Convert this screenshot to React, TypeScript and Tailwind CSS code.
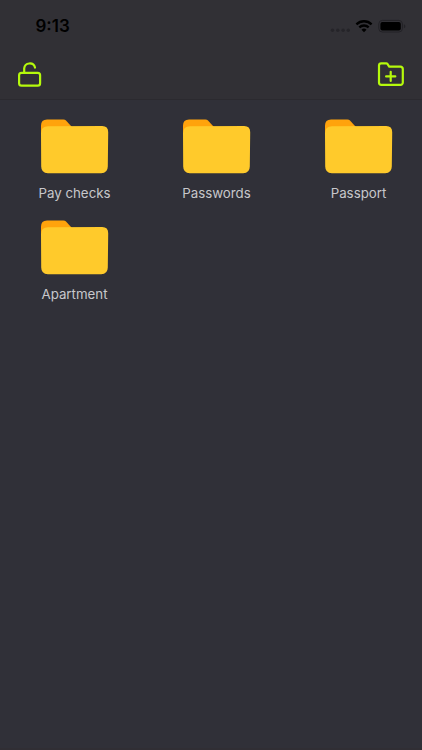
const folders = ['Pay checks', 'Passwords', 'Passport', 'Apartment'];

function StatusIcons() {
  return (
    <svg width="76" height="16" viewBox="330 18 76 16" fill="none">
      <g fill="#252429">
        <circle cx="332.5" cy="30.3" r="1.7" />
        <circle cx="337.8" cy="30.3" r="1.7" />
        <circle cx="343.1" cy="30.3" r="1.7" />
        <circle cx="348.3" cy="30.3" r="1.7" />
      </g>
      <g stroke="#000" strokeWidth="2.3">
        <path d="M356.4 24.3a11 11 0 0 1 15.2 0" />
        <path d="M359.3 27.4a6.8 6.8 0 0 1 9.4 0" />
      </g>
      <path d="M364 32.2l-2.5-2.5a3.6 3.6 0 0 1 5 0z" fill="#000" />
      <rect x="378.8" y="20.4" width="23.6" height="11.6" rx="3.5" stroke="#222126" />
      <rect x="380.4" y="22" width="20.4" height="8.4" rx="2" fill="#000" />
      <path d="M403.9 24.2c2 .8 2 3.2 0 4z" fill="#222126" />
    </svg>
  );
}

function UnlockIcon() {
  return (
    <svg width="24" height="26" viewBox="18 61 24 26" fill="none" stroke="#b5f90c" strokeWidth="2.2" strokeLinecap="round" strokeLinejoin="round">
      <rect x="19.1" y="72.8" width="21" height="12.9" rx="2.4" />
      <path d="M24.2 72.4V68.4a5.5 5.5 0 0 1 10.8-.8" />
    </svg>
  );
}

function FolderPlusIcon() {
  return (
    <svg width="27" height="25" viewBox="377 62 27 25" fill="none" stroke="#b5f90c" strokeWidth="2.2" strokeLinecap="round" strokeLinejoin="round">
      <path d="M379 65.6a2.3 2.3 0 0 1 2.3-2.3h4.9q.8 0 1.2.6l1.8 2.8h11.3a2.3 2.3 0 0 1 2.3 2.3v13.6a2.3 2.3 0 0 1-2.3 2.3h-19.2a2.3 2.3 0 0 1-2.3-2.3z" />
      <path d="M390.7 71.8v9.2M386.1 76.4h9.2" />
    </svg>
  );
}

function FolderArt() {
  return (
    <svg width="68" height="55" viewBox="40.8 119 68 55">
      <path d="M40.8 134V125.5Q40.8 119.5 46.8 119.5H63.3Q64.8 119.5 65.8 120.5L71.5 126.8V134z" fill="#ffa30c" />
      <path d="M40.8 133.5Q40.8 126.3 47.8 126.3L102 126.1Q108 126.1 108 132.3L107.6 166.5Q107.5 173.1 101 173.2H47.6Q41.1 173.1 41 166.5z" fill="#ffca2b" />
    </svg>
  );
}

export default function App() {
  return (
    <div className="flex h-[750px] w-[422px] flex-col overflow-hidden border-b-2 border-[#302e34] bg-[#303038] font-['Inter',sans-serif]">
      <header className="flex h-[99.5px] shrink-0 flex-col border-b border-[#2b2a2f] bg-[#313035]">
        <div className="flex h-[50px] items-start justify-between pl-[35.5px] pr-4 pt-[18px]">
          <span className="text-[17px] font-semibold leading-[17px] text-black">9:13</span>
          <StatusIcons />
        </div>
        <div className="flex justify-between px-[18px] pt-[11px]">
          <UnlockIcon />
          <div className="pt-px">
            <FolderPlusIcon />
          </div>
        </div>
      </header>
      <main className="grid grid-cols-[74px_74px_74px] gap-x-[68px] pl-[37.5px] pt-[19.5px]">
        {folders.map((name) => (
          <div key={name} className="flex h-[101.3px] flex-col items-center">
            <FolderArt />
            <span className="mt-[9px] whitespace-nowrap text-[13.3px] leading-5 text-[#c7c7cb]">
              {name}
            </span>
          </div>
        ))}
      </main>
    </div>
  );
}
